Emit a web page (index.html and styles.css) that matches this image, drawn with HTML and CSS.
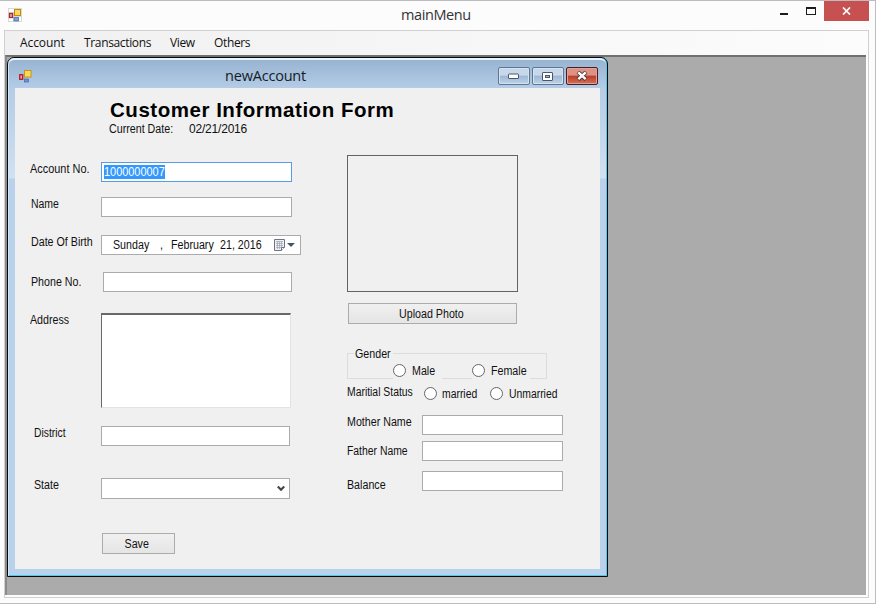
FILE: index.html
```html
<!DOCTYPE html>
<html lang="en">
<head>
<meta charset="utf-8">
<title>mainMenu</title>
<link rel="stylesheet" href="styles.css">
</head>
<body>
<div class="window">
  <header class="titlebar">
    <svg class="app-icon" width="14" height="14" viewBox="0 0 14 14"><rect width="14" height="14" fill="#d8d8d8"/><path d="M1 1h5v3H1zM1 10h4v3H1zM11 9h2v4h-2z" fill="#fff"/><rect x="1.500" y="5.500" width="3" height="4" fill="#f0b0b0" stroke="#a82a2e" stroke-width="1.300"/><rect x="6.500" y="1.500" width="6" height="6" fill="#fbd85a" stroke="#c08a10"/><rect x="6" y="9.500" width="4.500" height="3.500" fill="#7fa2dc" stroke="#4468b0" stroke-width=".7"/></svg>
    <h1 class="title">mainMenu</h1>
    <div class="controls">
      <svg width="60" height="20" viewBox="0 0 60 20"><path d="M0 13h8v2H0z" fill="#1c1c1c"/><path d="M26 7h10v8H26zM27 9v5h8V9z" fill="#1c1c1c" fill-rule="evenodd"/></svg>
      <span class="close"><svg width="9" height="8" viewBox="0 0 9 8"><path d="M1 .5l7 7M8 .5l-7 7" stroke="#fff" stroke-width="1.700"/></svg></span>
    </div>
  </header>
  <div class="client">
    <nav class="menu"><span class="m-account">Account</span><span class="m-trans">Transactions</span><span class="m-view">View</span><span>Others</span></nav>
    <div class="workspace">
      <section class="child">
        <div class="child-inner">
          <header class="child-bar">
            <svg class="child-icon" width="13" height="13" viewBox="0 0 13 13"><rect x=".7" y="4.700" width="3" height="4.600" fill="#f3a0a0" stroke="#b02024" stroke-width="1.300"/><rect x="5.500" y=".5" width="6.500" height="6.500" fill="#fbd85a" stroke="#c99512"/><rect x="5.500" y="9" width="4" height="3" fill="#6d93d6" stroke="#4468b0" stroke-width=".7"/></svg>
            <h2 class="child-title">newAccount</h2>
            <div class="child-controls">
              <span class="cbtn"><svg width="12" height="6" viewBox="0 0 12 6"><rect x=".5" y="1" width="10" height="4.500" rx=".5" fill="#fff" stroke="#4b5668"/></svg></span>
              <span class="cbtn"><svg width="12" height="9" viewBox="0 0 12 9"><rect x=".5" y=".5" width="10" height="8" rx=".5" fill="#fff" stroke="#4b5668"/><rect x="3.500" y="3.500" width="4" height="2" fill="#9eb8d8" stroke="#4b5668"/></svg></span>
              <span class="cbtn cclose"><svg width="13" height="10" viewBox="0 0 13 10"><path d="M2 1l8 7.500M10 1l-8 7.500" stroke="#4a3038" stroke-width="4"/><path d="M2.300 1.300l7.400 6.900M9.700 1.300l-7.400 6.900" stroke="#fff" stroke-width="2.500"/></svg></span>
            </div>
          </header>
          <main class="form">
            <h3 class="heading">Customer Information Form</h3>
            <div class="today"><span class="t today-label">Current Date:</span><span class="date">02/21/2016</span></div>
            <div class="columns">
              <div class="left">
                <div class="row r-account"><label class="t account-label">Account No.</label><div class="field focused"><span class="selected"><span class="t digits">1000000007</span></span></div></div>
                <div class="row inset r-name"><label class="t name-label">Name</label><div class="field"></div></div>
                <div class="row inset r-birth"><label class="t">Date Of Birth</label><div class="field picker"><span class="t day">Sunday</span><span class="t comma">,</span><span class="t month">February</span><span class="t num">21, 2016</span><svg width="22" height="12" viewBox="0 0 22 12"><path d="M.5.5h10v8l-3 3h-7z" fill="#eef0f4" stroke="#6d7380"/><path d="M2 2.500h7M2 4.500h7M2 6.500h7M2 8.500h6M3.500 2v8M5.500 2v8M7.500 2v8" stroke="#a4abb8" stroke-width=".8"/><path d="M10.500 8.500h-3v3" fill="#fff" stroke="#6d7380"/><path d="M13 4h8l-4 4z" fill="#47536b"/></svg></div></div>
                <div class="row inset r-phone"><label class="t">Phone No.</label><div class="field"></div></div>
                <div class="row r-address"><label class="t">Address</label><div class="field textarea"></div></div>
                <div class="row deep r-district"><label class="t district-label">District</label><div class="field short"></div></div>
                <div class="row deep r-state"><label class="t">State</label><div class="field short select"><svg width="8" height="7" viewBox="0 0 8 7"><path d="M.8 1.500L4 4.700 7.200 1.500" fill="none" stroke="#444" stroke-width="2.100"/></svg></div></div>
                <div class="button save"><span class="t center">Save</span></div>
              </div>
              <div class="right">
                <div class="photo"></div>
                <div class="button upload"><span class="t center">Upload Photo</span></div>
                <div class="group">
                  <span class="legend"><span class="t">Gender</span></span>
                  <div class="option male"><i class="radio"></i><span class="t">Male</span></div>
                  <div class="option female"><i class="radio"></i><span class="t">Female</span></div>
                </div>
                <div class="marital"><label class="t tight marital-label">Maritial Status</label><i class="radio"></i><span class="t tight married">married</span><i class="radio"></i><span class="t tight unmarried">Unmarried</span></div>
                <div class="rrow mother"><label class="t">Mother Name</label><div class="field"></div></div>
                <div class="rrow father"><label class="t tight">Father Name</label><div class="field"></div></div>
                <div class="rrow balance"><label class="t">Balance</label><div class="field"></div></div>
              </div>
            </div>
          </main>
        </div>
      </section>
    </div>
  </div>
</div>
</body>
</html>
```

FILE: styles.css
```css
* { box-sizing: border-box; }
body { margin: 0; width: 876px; height: 604px; overflow: hidden; font: 12px/14px "Liberation Sans", Arial, sans-serif; color: #111; }
h1, h2, h3 { margin: 0; font-weight: normal; }
svg { display: block; flex: none; }
.window { height: 604px; background: #fcfcfc; border: solid #bdbdbd; border-width: 1px 1px 1px 0; }
.titlebar { height: 29px; display: flex; align-items: flex-start; }
.app-icon { margin: 7px 0 0 8px; }
.title { margin-left: 379px; font: 14.5px/20px "Open Sans", "Noto Sans", sans-serif; margin-top: 4px; color: #333; letter-spacing: -.4px; white-space: nowrap; width: 90px; }
.controls { display: flex; margin-left: auto; margin-right: 6px; }
.controls > svg { margin-top: -1px; width: 60px; margin-right: -16px; }
.close { width: 45px; height: 20px; background: #c75050; display: flex; align-items: center; justify-content: center; }
.client { margin: 0 6px 0 4px; height: 568px; border: 1px solid #d0d0d0; }
.menu { height: 24px; display: flex; padding-left: 15px; background: linear-gradient(90deg, #f0f0f0, #fcfcfc); font: 12px/24px "Open Sans", "Noto Sans", sans-serif; letter-spacing: -.35px; white-space: nowrap; }
.m-account { width: 64px; letter-spacing: -.1px; }
.m-trans { width: 86px; }
.m-view { width: 44px; }
.workspace { height: 540px; margin-right: 2px; background: #ababab; border: solid #777; border-width: 2px 0 0 2px; border-top-color: #707070; border-left-color: #8b8b8b; }
.child { width: 601px; height: 520px; background: linear-gradient(90deg, #d3e6f5 0 50%, #52c8e8 50%); border: 1px solid #050a10; border-radius: 7px 7px 0 0; }
.child-inner { height: 518px; margin: 0 1px; background: linear-gradient(#98b4d1 0, #b5cde7 29px, #bdd3e9 60px, #d0e1f2 118px, #b9d1ea 119px, #b9d1ea); border-radius: 6px 6px 0 0; border-top: 2px solid #e6f3fa; border-bottom: 1px solid #52c8e8; padding: 0 6px; }
.child-bar { height: 28px; display: flex; align-items: flex-start; }
.child-icon { margin: 10px 0 0 4px; }
.child-title { margin: 6px 0 0 193px; width: 273px; font: 14.5px/20px "Open Sans", "Noto Sans", sans-serif; letter-spacing: -.2px; color: #151c28; }
.child-controls { display: flex; gap: 2px; margin-top: 7px; }
.cbtn { width: 32px; height: 18px; border: 1px solid #5f7692; border-radius: 2px; display: flex; align-items: center; justify-content: center; background: linear-gradient(#c7d8ea 0 45%, #9db7d4 50%, #bdd2e9); box-shadow: inset 0 0 0 1px #d5e3f1; }
.cclose { border-color: #4c1c24; background: linear-gradient(#dd9384 0 45%, #bb3c26 50%, #d2705c); box-shadow: inset 0 0 0 1px #dfa296; }
.form { width: 585px; height: 481px; background: #f0f0f0; }
.t { display: inline-block; transform: scaleX(.89); transform-origin: left center; white-space: nowrap; flex: none; }
.t.center { transform-origin: center; }
.t.tight { transform: scaleX(.865); }
.heading { font: bold 20.5px/24px "Liberation Sans", Arial, sans-serif; color: #000; padding: 10px 0 0 95px; white-space: nowrap; letter-spacing: .53px; }
.today { display: flex; padding-left: 94px; height: 14px; }
.today-label { width: 80px; }
.date { letter-spacing: -.2px; }
.columns { display: flex; padding-left: 15px; margin-top: 19px; }
.left { width: 317px; padding-top: 7px; }
.row { display: flex; align-items: flex-start; }
.row > label { width: 71px; }
.inset { padding-left: 1px; }
.inset > label { width: 70px; }
.deep { padding-left: 4px; }
.deep > label { width: 67px; }
.field { width: 191px; height: 20px; background: #fff; border: 1px solid #ababab; }
.focused { border-color: #569de5; padding: 2px; }
.selected { display: block; width: 61px; height: 14px; background: #3399ff; color: #fff; overflow: hidden; }
.t.digits { transform: scaleX(.91); }
.account-label { transform: scaleX(.91); }
.name-label { transform: scaleX(.87); }
.district-label { transform: scaleX(.86); }
.r-account { height: 35px; }
.r-name { height: 38px; }
.r-birth { height: 37px; }
.r-phone { height: 41px; }
.r-phone > label { width: 72px; margin-top: 3px; }
.r-phone > .field { width: 189px; }
.r-address { height: 113px; }
.r-district { height: 52px; }
.r-state { height: 55px; }
.picker { width: 200px; display: flex; align-items: center; padding-left: 11px; }
.day { width: 47px; }
.comma { width: 11px; }
.month { width: 49px; }
.num { width: 54px; }
.textarea { width: 190px; height: 95px; border: solid #e3e3e3; border-width: 2px 1px 1px 1px; border-top-color: #696969; border-left-color: #696969; }
.short { width: 189px; }
.select { height: 21px; display: flex; align-items: center; justify-content: flex-end; padding-right: 4px; }
.button { height: 21px; border: 1px solid #acacac; background: linear-gradient(#f0f0f0, #e5e5e5); display: flex; align-items: center; justify-content: center; }
.save { width: 73px; margin-left: 72px; padding-right: 3px; }
.right { width: 240px; }
.photo { width: 171px; height: 137px; border: 1px solid #646464; }
.upload { width: 169px; margin: 11px 0 0 1px; padding-right: 3px; }
.group { width: 200px; height: 26px; margin-top: 29px; border: 1px solid #dcdcdc; display: flex; align-items: flex-start; }
.legend { width: 39px; height: 14px; background: #f0f0f0; margin: -7px 0 0 6px; padding-left: 1px; }
.option { display: flex; align-items: center; height: 16px; background: #f0f0f0; margin-top: 9px; }
.male { width: 49px; }
.female { width: 58px; margin-left: 30px; }
.radio { width: 13px; height: 13px; border: 1px solid #666; border-radius: 50%; background: #fff; flex: none; }
.option .radio { margin-top: -1px; }
.option .t { margin-left: 6px; }
.marital { display: flex; align-items: flex-start; margin-top: 7px; height: 29px; }
.marital .radio { margin-top: 1px; }
.marital > span { margin: 1px 0 0 5px; }
.marital-label { width: 77px; margin-top: -1px; }
.marital .married { width: 48px; }
.marital .unmarried { margin-left: 6px; }
.rrow { display: flex; align-items: flex-start; }
.rrow > label { width: 75px; }
.rrow > .field { width: 141px; }
.mother { height: 26px; }
.father { height: 30px; }
.father > label { margin-top: 3px; }
.balance > label { margin-top: 7px; }
```
